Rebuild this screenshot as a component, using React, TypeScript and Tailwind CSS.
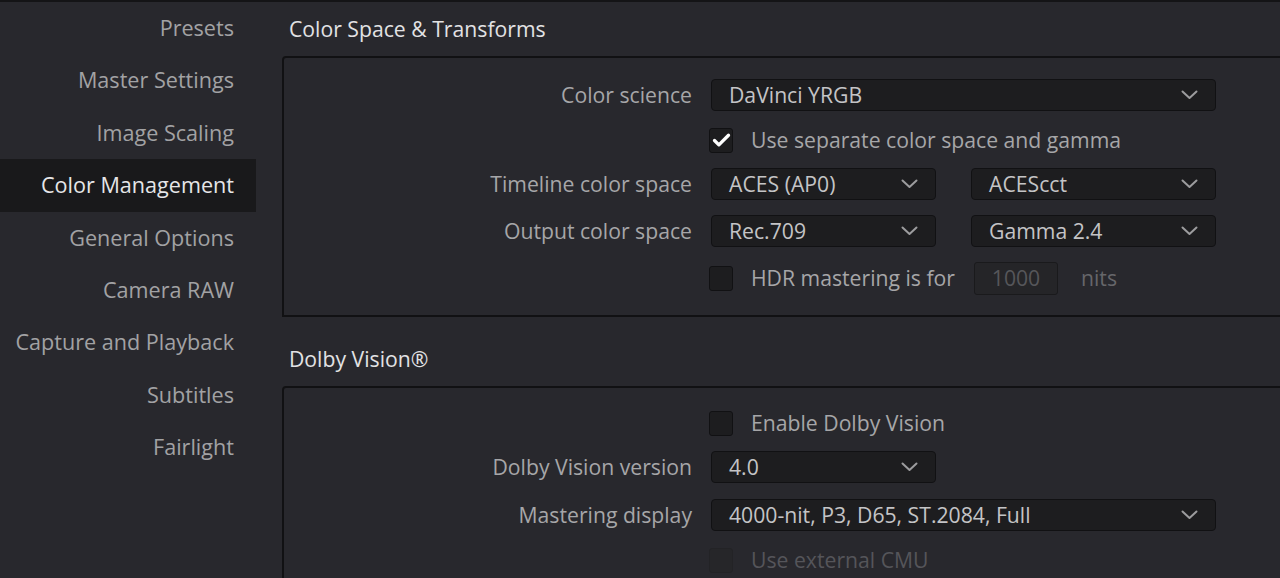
import { Check } from "lucide-react";

const navItems = [
  "Presets",
  "Master Settings",
  "Image Scaling",
  "Color Management",
  "General Options",
  "Camera RAW",
  "Capture and Playback",
  "Subtitles",
  "Fairlight",
];

function Chevron() {
  return (
    <svg width="17" height="10" viewBox="0 0 17 10" fill="none" className="text-[#9c9c9e]">
      <polyline points="1.5,1.5 8.5,8 15.5,1.5" stroke="currentColor" strokeWidth="2" strokeLinecap="round" strokeLinejoin="round" />
    </svg>
  );
}

function Dropdown({ value, width }: { value: string; width: string }) {
  return (
    <div
      className={`${width} flex h-[32px] items-center justify-between rounded-[4px] border border-[#111113] bg-[#1d1d1f] pl-[17px] pr-[17px] text-[#c4c4c6]`}
    >
      <span>{value}</span>
      <Chevron />
    </div>
  );
}

function Checkbox({ checked, disabled }: { checked?: boolean; disabled?: boolean }) {
  return (
    <div
      className={`flex h-[25px] w-[24px] items-center justify-center rounded-[3px] border ${
        disabled ? "border-[#232326] bg-[#262629]" : "border-[#111113] bg-[#1d1d1f]"
      }`}
    >
      {checked && <Check size={21} strokeWidth={3.75} className="text-white" />}
    </div>
  );
}

function Row({ label, children, className = "" }: { label?: string; children: React.ReactNode; className?: string }) {
  return (
    <div className={`flex items-center ${className}`}>
      <div className="w-[408px] shrink-0 text-right text-[#a6a6a8]">{label}</div>
      <div className="ml-[19px] flex items-center">{children}</div>
    </div>
  );
}

function CheckRow({
  text,
  checked,
  disabled,
  className = "",
  children,
}: {
  text: string;
  checked?: boolean;
  disabled?: boolean;
  className?: string;
  children?: React.ReactNode;
}) {
  return (
    <Row className={`h-[30px] ${className}`}>
      <div className="-ml-[2px] flex items-center">
        <Checkbox checked={checked} disabled={disabled} />
        <span className={`ml-[18px] ${disabled ? "text-[#55555a]" : "text-[#a6a6a8]"}`}>{text}</span>
        {children}
      </div>
    </Row>
  );
}

export default function App() {
  return (
    <div
      className="flex h-[578px] w-[1280px] overflow-hidden border-t-2 border-[#141416] bg-[#28282d]"
      style={{ fontFamily: '"Open Sans", "Noto Sans", sans-serif' }}
    >
      <nav className="w-[256px] shrink-0 text-[21.6px]">
        {navItems.map((item) => {
          const active = item === "Color Management";
          return (
            <div
              key={item}
              className={`flex h-[52.4px] items-center justify-end pr-[22px] ${
                active ? "bg-[#19191b] text-[#e6e6e8]" : "text-[#a2a2a4]"
              }`}
            >
              {item}
            </div>
          );
        })}
      </nav>

      <main className="ml-[26px] mr-[-20px] flex-1 text-[21.2px]">
        <h2 className="mt-[7px] flex h-[40px] items-center pl-[7px] text-[#e2e2e4]">Color Space &amp; Transforms</h2>
        <section className="mt-[7px] rounded-tl-[4px] border-2 border-[#111113] pb-[22px] pt-[21px]">
          <Row label="Color science">
            <Dropdown value="DaVinci YRGB" width="w-[505px]" />
          </Row>
          <CheckRow text="Use separate color space and gamma" checked className="mt-[14px]" />
          <Row label="Timeline color space" className="mt-[13px]">
            <Dropdown value="ACES (AP0)" width="w-[225px]" />
            <div className="ml-[35px]">
              <Dropdown value="ACEScct" width="w-[245px]" />
            </div>
          </Row>
          <Row label="Output color space" className="mt-[15px]">
            <Dropdown value="Rec.709" width="w-[225px]" />
            <div className="ml-[35px]">
              <Dropdown value="Gamma 2.4" width="w-[245px]" />
            </div>
          </Row>
          <CheckRow text="HDR mastering is for" className="mt-[16px]">
            <div className="ml-[19px] flex h-[33px] w-[84px] items-center justify-center rounded-[3px] border border-[#1a1a1c] bg-[#252528] text-[#56565a]">
              1000
            </div>
            <span className="ml-[23px] text-[#66666a]">nits</span>
          </CheckRow>
        </section>

        <h2 className="mt-[22px] flex h-[40px] items-center pl-[7px] text-[#e2e2e4]">Dolby Vision®</h2>
        <section className="mt-[7px] h-[300px] rounded-tl-[4px] border-2 border-[#111113] pt-[20px]">
          <CheckRow text="Enable Dolby Vision" />
          <Row label="Dolby Vision version" className="mt-[13px]">
            <Dropdown value="4.0" width="w-[225px]" />
          </Row>
          <Row label="Mastering display" className="mt-[16px]">
            <Dropdown value="4000-nit, P3, D65, ST.2084, Full" width="w-[505px]" />
          </Row>
          <CheckRow text="Use external CMU" disabled className="mt-[14px]" />
        </section>
      </main>
    </div>
  );
}
